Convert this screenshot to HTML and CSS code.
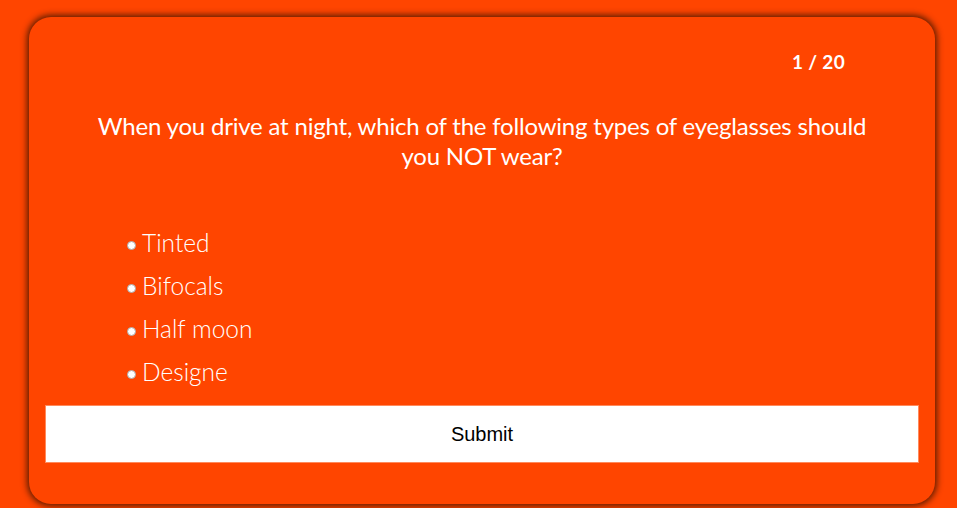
FILE: index.html
```html
<!DOCTYPE html>
<html>
<head>
<meta charset="utf-8">
<link rel="stylesheet" href="styles.css">
</head>
<body>
<div class="card">
  <div class="counter">1 / 20</div>
  <h2 class="question">When you drive at night, which of the following types of eyeglasses should you NOT wear?</h2>
  <ul class="options">
    <li><span class="dot"></span>Tinted</li>
    <li><span class="dot"></span>Bifocals</li>
    <li><span class="dot"></span>Half moon</li>
    <li><span class="dot"></span>Designe</li>
  </ul>
  <button class="submit">Submit</button>
</div>
</body>
</html>
```
FILE: styles.css
```css
* { box-sizing: border-box; }
html, body { margin: 0; height: 100%; }
body {
  background: #ff4500;
  padding: 17px 22px 4px 29px;
  font-family: Lato, "Liberation Sans", sans-serif;
  overflow: hidden;
}
.card {
  background: #ff4500;
  border-radius: 22px;
  box-shadow: 0 0 6px 2px rgba(60, 20, 0, 0.85);
  height: 487px;
  padding: 0 16px;
  display: flex;
  flex-direction: column;
}
.counter {
  color: #fff;
  font-weight: 700;
  font-size: 19px;
  text-align: right;
  padding: 33px 74px 0 0;
  line-height: 24px;
  letter-spacing: 0.3px;
}
.question {
  color: #fff;
  font-weight: 400;
  font-size: 24px;
  line-height: 30px;
  text-align: center;
  margin: 37px 40px 0;
  letter-spacing: -0.2px;
}
.options {
  list-style: none;
  margin: 50px 0 0;
  padding: 0 0 0 82px;
}
.options li {
  color: #fff;
  font-weight: 300;
  font-size: 24.5px;
  line-height: 43px;
  display: flex;
  align-items: center;
}
.dot {
  width: 9px;
  height: 9px;
  border-radius: 50%;
  background: #fff;
  border: 1px solid #aaa;
  margin: 6px 6px 0 0;
}
.submit {
  margin-top: 12px;
  height: 58px;
  width: 100%;
  background: #fff;
  border: 1px solid #ff8a5c;
  font-family: "Liberation Sans", Arial, sans-serif;
  font-size: 20px;
  color: #000;
}
```
